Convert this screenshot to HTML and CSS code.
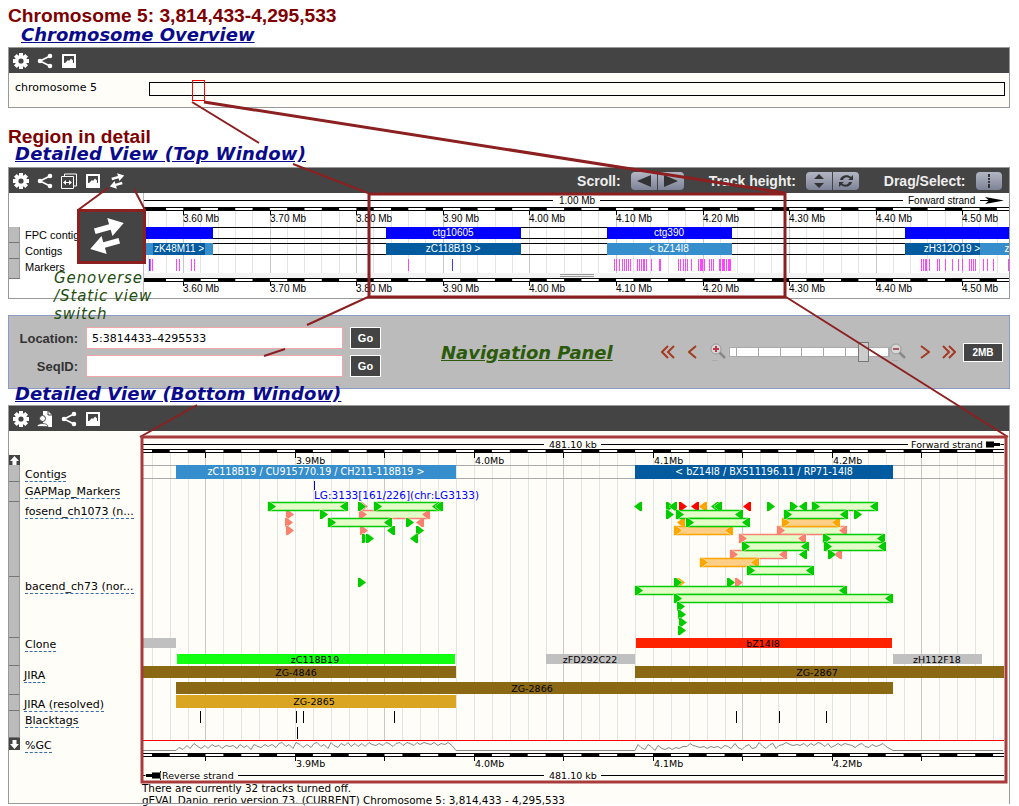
FILE: index.html
```html
<!DOCTYPE html>
<html lang="en">
<head>
    <meta charset="UTF-8">
    <title>Chromosome 5: 3,814,433-4,295,533</title>
    <link rel="stylesheet" href="styles.css">
</head>
<body>
    <!-- shared icons and track glyphs -->
    <svg class="defs" width="0" height="0">
        <symbol id="i-gear" viewBox="0 0 16 16">
            <g fill="#fff">
                <rect x="6" y="0" width="4" height="16"/>
                <rect x="0" y="6" width="16" height="4"/>
                <rect x="6" y="0" width="4" height="16" transform="rotate(45 8 8)"/>
                <rect x="6" y="0" width="4" height="16" transform="rotate(-45 8 8)"/>
                <circle cx="8" cy="8" r="6"/>
            </g>
            <circle cx="8" cy="8" r="2.6" fill="#444"/>
        </symbol>
        <symbol id="i-share" viewBox="0 0 16 16">
            <path d="M13 3L3 8L13 13" fill="none" stroke="#fff" stroke-width="1.6"/>
            <circle cx="13" cy="3" r="2.3" fill="#fff"/>
            <circle cx="13" cy="13" r="2.3" fill="#fff"/>
            <circle cx="3" cy="8" r="2.3" fill="#fff"/>
        </symbol>
        <symbol id="i-image" viewBox="0 0 14 14">
            <path d="M0 0H14V14H0ZM2 2V9H12V2Z" fill="#fff"/>
            <path d="M3 9L6 6L7 7L9 4.5L11 6.5V9Z" fill="#fff"/>
        </symbol>
        <symbol id="i-pan" viewBox="0 0 16 16">
            <path d="M3.5 3.5V1H15.5V13H13M.5 3.5H12.5V15.5H.5Z" fill="none" stroke="#fff"/>
            <path d="M2 9.5L5 7V9H8V7L11 9.5L8 12V10H5V12Z" fill="#fff"/>
        </symbol>
        <symbol id="i-swap" viewBox="0 0 16 16">
            <g fill="#fff" transform="rotate(-16 8 8)">
                <path d="M4 3.9H10V1.400L15.500 5L10 8.600V6.100H4Z"/>
                <path d="M12 12.100H6V14.600L.5 11L6 7.400V9.900H12Z"/>
            </g>
        </symbol>
        <symbol id="i-doc" viewBox="0 0 16 16">
            <path d="M6 0H11L15 4V16H6Z" fill="#fff"/>
            <path d="M11 0V4H15" fill="none" stroke="#444"/>
            <circle cx="5.5" cy="7.5" r="3" fill="#fff" stroke="#444"/>
            <path d="M0 15.5C0 11.5 11 11.5 11 15.5Z" fill="#fff" stroke="#444" stroke-width=".8"/>
        </symbol>
        <path id="ar" d="M0 -4.5H2L8 0L2 4.5H0Z"/>
        <path id="al" d="M8 -4.5H6L0 0L6 4.5H8Z"/>
        <path id="strand" d="M0 -3H8V-1.500H14V1.500H8V3H0Z"/>
    </svg>

    <div class="page">
        <h1 class="page-title">Chromosome 5: 3,814,433-4,295,533</h1>
        <h2 class="note-title overview-title">Chromosome Overview</h2>

        <section class="panel">
            <div class="panel-head">
                <span class="head-icon"><svg class="ic16"><use href="#i-gear"/></svg></span>
                <span class="head-icon"><svg class="ic16"><use href="#i-share"/></svg></span>
                <span class="head-icon"><svg class="ic14"><use href="#i-image"/></svg></span>
            </div>
            <div class="overview-body">
                <div class="overview-label">chromosome 5</div>
                <div class="chr-bar"><span class="chr-window"></span></div>
            </div>
        </section>

        <h1 class="page-title region-title">Region in detail</h1>
        <h2 class="note-title top-title">Detailed View (Top Window)</h2>

        <section class="panel">
            <div class="panel-head">
                <span class="head-icon"><svg class="ic16"><use href="#i-gear"/></svg></span>
                <span class="head-icon"><svg class="ic16"><use href="#i-share"/></svg></span>
                <span class="head-icon"><svg class="ic16"><use href="#i-pan"/></svg></span>
                <span class="head-icon"><svg class="ic14"><use href="#i-image"/></svg></span>
                <span class="head-icon"><svg class="ic18"><use href="#i-swap"/></svg></span>
                <div class="head-tools">
                    <span class="tool-label">Scroll:</span>
                    <div class="tool-group">
                        <button class="tool-btn"><svg width="16" height="12"><path class="tool-glyph" d="M1 6L15 0V12Z"/></svg></button>
                        <button class="tool-btn"><svg width="16" height="12"><path class="tool-glyph" d="M15 6L1 0V12Z"/></svg></button>
                    </div>
                    <span class="tool-label">Track height:</span>
                    <div class="tool-group">
                        <button class="tool-btn"><svg width="12" height="14"><path class="tool-glyph" d="M6 0L11 5H1ZM6 14L1 9H11Z"/></svg></button>
                        <button class="tool-btn"><svg width="16" height="14"><path class="tool-glyph" d="M2 6C3 1 10 0 13 3L15 1V6H10L12 4.5C9 2.5 6 3 5 6ZM14 8C13 13 6 14 3 11L1 13V8H6L4 9.500C7 11.500 10 11 11 8Z"/></svg></button>
                    </div>
                    <span class="tool-label">Drag/Select:</span>
                    <div class="tool-group">
                        <button class="tool-btn tool-btn-drag"><svg width="4" height="14"><path class="tool-glyph" d="M1 0H3V3H1ZM1 4H3V6H1ZM1 7H3V9H1ZM1 10H3V14H1Z"/></svg></button>
                    </div>
                </div>
            </div>
            <div class="top-body">
                <div class="top-labels">
                    <div class="top-row"><span class="grip"></span><span>FPC contigs</span></div>
                    <div class="top-row"><span class="grip"></span><span>Contigs</span></div>
                    <div class="top-row top-row-last"><span class="grip"></span><span>Markers</span></div>
                </div>
                <svg class="top-image" width="865" height="105" viewBox="144 193 865 105">
                    <path class="grid" d="M148.500 211V278M166.500 211V278M200.500 211V278M218.500 211V278M235.500 211V278M252.500 211V278M287.500 211V278M304.500 211V278M321.500 211V278M339.500 211V278M373.500 211V278M391.500 211V278M408.500 211V278M425.500 211V278M460.500 211V278M477.500 211V278M495.500 211V278M512.500 211V278M546.500 211V278M564.500 211V278M581.500 211V278M598.500 211V278M633.500 211V278M650.500 211V278M668.500 211V278M685.500 211V278M720.500 211V278M737.500 211V278M754.500 211V278M771.500 211V278M806.500 211V278M823.500 211V278M841.500 211V278M858.500 211V278M893.500 211V278M910.500 211V278M927.500 211V278M945.500 211V278M979.500 211V278M997.500 211V278"/>
                    <path class="grid-major" d="M183.500 211V278M270.500 211V278M356.500 211V278M443.500 211V278M529.500 211V278M616.500 211V278M703.500 211V278M789.500 211V278M876.500 211V278M962.500 211V278"/>
                    <rect class="strip-soft" x="144" y="273" width="865" height="5"/>
                    <path class="rule" d="M144 200.500H553M600 200.500H903M980 200.500H990"/>
                    <path d="M985 197L1004 200.500L985 204L989 200.500Z"/>
                    <text class="t-ruler" x="559" y="203.500">1.00 Mb</text>
                    <text class="t-ruler" x="908" y="203.500">Forward strand</text>

                    <rect x="144" y="207" width="865" height="4"/>
                    <path class="strip-dash strip-dash-top" d="M166 209H1009"/>
                    <rect x="144" y="278" width="865" height="4"/>
                    <path class="strip-dash strip-dash-top" d="M166 280H1009"/>
                    <path class="rule" d="M183.500 211V215M270.500 211V215M356.500 211V215M443.500 211V215M529.500 211V215M616.500 211V215M703.500 211V215M789.500 211V215M876.500 211V215M962.500 211V215M183.500 282V286M270.500 282V286M356.500 282V286M443.500 282V286M529.500 282V286M616.500 282V286M703.500 282V286M789.500 282V286M876.500 282V286M962.500 282V286"/>
                    <g class="t-ruler">
                        <text x="183" y="222">3.60 Mb</text><text x="270" y="222">3.70 Mb</text><text x="356" y="222">3.80 Mb</text><text x="443" y="222">3.90 Mb</text><text x="529" y="222">4.00 Mb</text><text x="616" y="222">4.10 Mb</text><text x="703" y="222">4.20 Mb</text><text x="789" y="222">4.30 Mb</text><text x="876" y="222">4.40 Mb</text><text x="962" y="222">4.50 Mb</text>
                        <text x="183" y="292">3.60 Mb</text><text x="270" y="292">3.70 Mb</text><text x="356" y="292">3.80 Mb</text><text x="443" y="292">3.90 Mb</text><text x="529" y="292">4.00 Mb</text><text x="616" y="292">4.10 Mb</text><text x="703" y="292">4.20 Mb</text><text x="789" y="292">4.30 Mb</text><text x="876" y="292">4.40 Mb</text><text x="962" y="292">4.50 Mb</text>
                    </g>

                    <!-- FPC contigs -->
                    <path class="rule" d="M144 227.500H1009M144 238.500H1009M144 243.500H1009M144 254.500H1009"/>
                    <g class="c-fpc">
                        <rect x="144" y="227" width="69" height="12"/>
                        <rect x="386" y="227" width="135" height="12"/>
                        <rect x="607" y="227" width="125" height="12"/>
                        <rect x="905" y="227" width="104" height="12"/>
                    </g>
                    <g class="t-bar-top">
                        <text x="453" y="236">ctg10605</text>
                        <text x="669" y="236">ctg390</text>
                    </g>

                    <!-- Contigs -->
                    <g class="c-light">
                        <rect x="144" y="243" width="69" height="12"/>
                        <rect x="607" y="243" width="125" height="12"/>
                        <rect x="980" y="243" width="29" height="12"/>
                    </g>
                    <g class="c-dark">
                        <rect x="153" y="243" width="52" height="12"/>
                        <rect x="386" y="243" width="135" height="12"/>
                        <rect x="905" y="243" width="75" height="12"/>
                    </g>
                    <g class="t-bar-top">
                        <text x="179" y="252">zK48M11 &gt;</text>
                        <text x="453" y="252">zC118B19 &gt;</text>
                        <text x="669" y="252">&lt; bZ14I8</text>
                        <text x="952" y="252">zH312O19 &gt;</text>
                        <text x="1007" y="252">z</text>
                    </g>

                    <!-- Markers -->
                    <path class="marker" d="M150.500 259V271M152.500 259V271M176.500 259V271M179.500 259V271M191.500 259V271M194.500 259V271M408.500 259V271M614.500 259V271M616.500 259V271M619.500 259V271M622.500 259V271M624.500 259V271M626.500 259V271M628.500 259V271M630.500 259V271M637.500 259V271M639.500 259V271M641.500 259V271M643.500 259V271M644.500 259V271M646.500 259V271M651.500 259V271M659.500 259V271M660.500 259V271M678.500 259V271M680.500 259V271M683.500 259V271M685.500 259V271M687.500 259V271M691.500 259V271M698.500 259V271M700.500 259V271M701.500 259V271M702.500 259V271M704.500 259V271M709.500 259V271M711.500 259V271M713.500 259V271M719.500 259V271M720.500 259V271M722.500 259V271M723.500 259V271M724.500 259V271M726.500 259V271M728.500 259V271M729.500 259V271M730.500 259V271M921.500 259V271M923.500 259V271M925.500 259V271M926.500 259V271M929.500 259V271M937.500 259V271M939.500 259V271M945.500 259V271M952.500 259V271M958.500 259V271M962.500 259V271M969.500 259V271M971.500 259V271M973.500 259V271M975.500 259V271M983.500 259V271M987.500 259V271M993.500 259V271M1008.500 259V271"/>
                    <path class="marker-blue" d="M149.500 259V271M452.500 259V271"/>
                    <path class="resize-grip" d="M560 274.500H594M560 276.500H594"/>
                </svg>
            </div>
        </section>

        <section class="nav-panel">
            <div class="nav-form">
                <div class="nav-row">
                    <label class="nav-label">Location:</label>
                    <input class="nav-input" type="text" value="5:3814433&#8211;4295533">
                    <button class="go-btn">Go</button>
                </div>
                <div class="nav-row">
                    <label class="nav-label">SeqID:</label>
                    <input class="nav-input" type="text">
                    <button class="go-btn">Go</button>
                </div>
            </div>
            <h2 class="nav-title">Navigation Panel</h2>
            <div class="nav-zoom">
                <svg class="chev" width="14" height="14"><path d="M7 1L1 7L7 13M13 1L7 7L13 13"/></svg>
                <svg class="chev chev-one" width="9" height="14"><path d="M8 1L1 7L8 13"/></svg>
                <svg class="zoom-ic zoom-ic-in" width="16" height="18" viewBox="0 0 16 18"><path class="zoom-handle" d="M9 9L15 15"/><circle class="zoom-lens" cx="6" cy="6" r="5"/><path class="zoom-sign" d="M3 6H9M6 3V9"/><path class="zoom-dash" d="M2 17.500H8"/></svg>
                <div class="slider">
                    <span class="slider-seg"></span><span class="slider-seg"></span><span class="slider-seg"></span><span class="slider-seg"></span><span class="slider-seg"></span><span class="slider-seg"></span><span class="slider-seg"></span><span class="slider-seg"></span>
                    <span class="slider-handle"></span>
                </div>
                <svg class="zoom-ic zoom-ic-out" width="16" height="18" viewBox="0 0 16 18"><path class="zoom-handle" d="M9 9L15 15"/><circle class="zoom-lens" cx="6" cy="6" r="5"/><path class="zoom-sign" d="M3 6H9"/><path class="zoom-dash" d="M2 17.500H8"/></svg>
                <svg class="chev chev-next" width="10" height="14"><path d="M1 1L9 7L1 13"/></svg>
                <svg class="chev chev-end" width="14" height="14"><path d="M1 1L7 7L1 13M7 1L13 7L7 13"/></svg>
                <button class="zoom-size">2MB</button>
            </div>
        </section>

        <h2 class="note-title bottom-title">Detailed View (Bottom Window)</h2>

        <section class="panel panel-bottom">
            <div class="panel-head">
                <span class="head-icon"><svg class="ic16"><use href="#i-gear"/></svg></span>
                <span class="head-icon"><svg class="ic16"><use href="#i-doc"/></svg></span>
                <span class="head-icon"><svg class="ic16"><use href="#i-share"/></svg></span>
                <span class="head-icon"><svg class="ic14"><use href="#i-image"/></svg></span>
            </div>
            <div class="bottom-body">
                <div class="bottom-labels">
                    <span class="move-btn"><svg width="9" height="9"><path d="M4.500 0L9 5H6.500V9H2.500V5H0Z"/></svg></span>
                    <div class="trow t17"><span class="grip"></span><span class="tlabel">Contigs</span></div>
                    <div class="trow t20"><span class="grip"></span><span class="tlabel">GAPMap_Markers</span></div>
                    <div class="trow t75"><span class="grip"></span><span class="tlabel">fosend_ch1073 (n...</span></div>
                    <div class="trow t61"><span class="grip"></span><span class="tlabel">bacend_ch73 (nor...</span></div>
                    <div class="trow t28"><span class="grip"></span><span class="tlabel">Clone</span></div>
                    <div class="trow t29"><span class="grip"></span><span class="tlabel tlabel-jira">JIRA</span></div>
                    <div class="trow t16"><span class="grip"></span><span class="tlabel tlabel-jira">JIRA (resolved)</span></div>
                    <div class="trow t27"><span class="grip"></span><span class="tlabel">Blacktags</span></div>
                    <div class="trow t12"><span class="move-btn"><svg width="9" height="9"><path d="M4.500 9L0 4H2.500V0H6.500V4H9Z"/></svg></span><span class="tlabel tlabel-gc">%GC</span></div>
                </div>
                <svg class="bottom-image" width="866" height="352" viewBox="143 431 866 352">
                    <path class="grid" d="M152.500 453V740M170.500 453V740M188.500 453V740M223.500 453V740M241.500 453V740M259.500 453V740M277.500 453V740M295.500 453V740M313.500 453V740M331.500 453V740M349.500 453V740M367.500 453V740M402.500 453V740M420.500 453V740M438.500 453V740M456.500 453V740M474.500 453V740M492.500 453V740M510.500 453V740M528.500 453V740M546.500 453V740M581.500 453V740M599.500 453V740M617.500 453V740M635.500 453V740M653.500 453V740M671.500 453V740M689.500 453V740M707.500 453V740M725.500 453V740M760.500 453V740M778.500 453V740M796.500 453V740M814.500 453V740M832.500 453V740M850.500 453V740M868.500 453V740M886.500 453V740M904.500 453V740M939.500 453V740M957.500 453V740M975.500 453V740M993.500 453V740"/>
                    <path class="grid-major" d="M205.500 453V740M384.500 453V740M563.500 453V740M742.500 453V740M921.500 453V740"/>

                    <!-- top ruler -->
                    <path class="rule" d="M143 444.500H544M601 444.500H908M986 444.500H1004"/>
                    <use href="#strand" x="986" y="444.500"/>
                    <text class="t-track" x="549" y="448">481.10 kb</text>
                    <text class="t-track" x="911" y="448">Forward strand</text>
                    <rect x="143" y="449" width="861" height="4"/>
                    <path class="strip-dash strip-dash-bottom" d="M169.700 451H1004"/>
                    <path class="strip-dash-head" d="M143 451H152"/>
                    <path class="rule" d="M205.500 453V458M295.500 453V458M384.500 453V458M474.500 453V458M563.500 453V458M653.500 453V458M742.500 453V458M832.500 453V458M921.500 453V458"/>
                    <g class="t-track">
                        <text x="296" y="464">3.9Mb</text><text x="475" y="464">4.0Mb</text><text x="654" y="464">4.1Mb</text><text x="833" y="464">4.2Mb</text>
                    </g>

                    <!-- contigs -->
                    <path class="contig-rule" d="M143 465.500H1004M143 478.500H1004"/>
                    <rect class="c-light" x="176" y="465" width="280" height="14"/>
                    <rect class="c-dark" x="635" y="465" width="258" height="14"/>
                    <g class="t-contig">
                        <text x="316" y="475">zC118B19 / CU915770.19 / CH211-118B19 &gt;</text>
                        <text x="764" y="475">&lt; bZ14I8 / BX511196.11 / RP71-14I8</text>
                    </g>

                    <!-- GAPMap -->
                    <path class="gap-tick" d="M314.500 481V490"/>
                    <text class="t-gap" x="314" y="499">LG:3133[161/226](chr:LG3133)</text>

                    <!-- fosend / bacend: salmon -->
                    <g class="f-salmon">
                        <use href="#ar" x="286" y="514.500"/><use href="#ar" x="285" y="522.500"/><use href="#ar" x="286" y="530.500"/>
                        <use href="#ar" x="360" y="506.500"/><use href="#ar" x="360" y="530.500"/><use href="#al" x="416" y="522.500"/>
                        <use href="#al" x="834" y="554.500"/><use href="#ar" x="735" y="582.500"/>
                        <rect class="box" x="360" y="511" width="69" height="7"/><use href="#ar" x="359" y="514.500"/><use href="#al" x="422" y="514.500"/>
                        <rect class="box" x="778" y="527" width="68" height="7"/><use href="#ar" x="777" y="530.500"/><use href="#al" x="839" y="530.500"/>
                        <rect class="box" x="740" y="535" width="65" height="7"/><use href="#ar" x="739" y="538.500"/><use href="#al" x="798" y="538.500"/>
                        <rect class="box" x="731" y="551" width="55" height="7"/><use href="#ar" x="730" y="554.500"/><use href="#al" x="779" y="554.500"/>
                    </g>
                    <!-- orange -->
                    <g class="f-orange">
                        <use href="#al" x="699" y="506.500"/><use href="#al" x="677" y="522.500"/><use href="#ar" x="677" y="582.500"/>
                        <rect class="box" x="783" y="519" width="56" height="7"/><use href="#ar" x="782" y="522.500"/><use href="#al" x="832" y="522.500"/>
                        <rect class="box" x="675" y="527" width="57" height="7"/><use href="#ar" x="674" y="530.500"/><use href="#al" x="725" y="530.500"/>
                        <rect class="box" x="701" y="559" width="57" height="7"/><use href="#ar" x="700" y="562.500"/><use href="#al" x="751" y="562.500"/>
                    </g>
                    <!-- red -->
                    <g class="f-red">
                        <use href="#ar" x="679" y="506.500"/><use href="#al" x="691" y="506.500"/><use href="#al" x="743" y="506.500"/>
                    </g>
                    <!-- green -->
                    <g class="f-green">
                        <rect class="box" x="269" y="503" width="78" height="7"/><use href="#ar" x="268" y="506.500"/><use href="#al" x="340" y="506.500"/>
                        <use href="#ar" x="358" y="506.500"/>
                        <rect class="box" x="375" y="503" width="67" height="7"/><use href="#ar" x="374" y="506.500"/><use href="#al" x="432" y="506.500"/><use href="#al" x="435" y="506.500"/>
                        <use href="#ar" x="320" y="514.500"/>
                        <rect class="box" x="329" y="519" width="62" height="7"/><use href="#ar" x="328" y="522.500"/><use href="#al" x="384" y="522.500"/>
                        <use href="#ar" x="406" y="522.500"/>
                        <use href="#al" x="387" y="530.500"/><use href="#ar" x="416" y="530.500"/>
                        <use href="#ar" x="362" y="538.500"/><use href="#ar" x="366" y="538.500"/><use href="#al" x="410" y="538.500"/>
                        <use href="#ar" x="358" y="582.500"/>

                        <use href="#al" x="634" y="506.500"/><use href="#ar" x="666" y="506.500"/><use href="#al" x="669" y="506.500"/>
                        <use href="#al" x="711" y="506.500"/><use href="#al" x="714" y="506.500"/>
                        <use href="#ar" x="767" y="506.500"/><use href="#ar" x="790" y="506.500"/><use href="#al" x="799" y="506.500"/>
                        <rect class="box" x="813" y="503" width="64" height="7"/><use href="#ar" x="812" y="506.500"/><use href="#al" x="870" y="506.500"/>
                        <use href="#ar" x="666" y="514.500"/>
                        <rect class="box" x="677" y="511" width="65" height="7"/><use href="#ar" x="676" y="514.500"/><use href="#al" x="735" y="514.500"/>
                        <rect class="box" x="785" y="511" width="62" height="7"/><use href="#ar" x="784" y="514.500"/><use href="#al" x="840" y="514.500"/>
                        <use href="#ar" x="854" y="514.500"/>
                        <rect class="box" x="687" y="519" width="62" height="7"/><use href="#ar" x="686" y="522.500"/><use href="#al" x="742" y="522.500"/>
                        <rect class="box" x="824" y="535" width="60" height="7"/><use href="#ar" x="823" y="538.500"/><use href="#al" x="877" y="538.500"/>
                        <rect class="box" x="743" y="543" width="65" height="7"/><use href="#ar" x="742" y="546.500"/><use href="#al" x="801" y="546.500"/>
                        <rect class="box" x="825" y="543" width="60" height="7"/><use href="#ar" x="824" y="546.500"/><use href="#al" x="878" y="546.500"/>
                        <use href="#al" x="799" y="554.500"/><use href="#ar" x="828" y="554.500"/>
                        <rect class="box" x="748" y="567" width="65" height="7"/><use href="#ar" x="747" y="570.500"/><use href="#al" x="806" y="570.500"/>
                        <use href="#ar" x="674" y="582.500"/><use href="#ar" x="727" y="582.500"/>
                        <rect class="box" x="636" y="587" width="210" height="7"/><use href="#ar" x="635" y="590.500"/><use href="#al" x="839" y="590.500"/>
                        <rect class="box" x="675" y="595" width="217" height="7"/><use href="#ar" x="674" y="598.500"/><use href="#al" x="885" y="598.500"/>
                        <use href="#ar" x="677" y="606.500"/><use href="#ar" x="678" y="614.500"/><use href="#ar" x="679" y="622.500"/><use href="#ar" x="678" y="630.500"/>
                    </g>

                    <!-- clone -->
                    <g class="c-grey">
                        <rect x="143" y="638" width="33" height="10"/>
                        <rect x="546" y="654" width="89" height="10"/>
                        <rect x="893" y="654" width="89" height="10"/>
                    </g>
                    <rect class="c-red" x="636" y="638" width="256" height="10"/>
                    <rect class="c-lime" x="177" y="654" width="278" height="10"/>
                    <!-- JIRA -->
                    <g class="c-brown">
                        <rect x="143" y="666" width="313" height="12"/>
                        <rect x="635" y="666" width="369" height="12"/>
                        <rect x="176" y="682" width="717" height="12"/>
                    </g>
                    <rect class="c-gold" x="176" y="695" width="280" height="13"/>
                    <g class="t-bar">
                        <text x="763" y="647">bZ14I8</text>
                        <text x="315" y="663">zC118B19</text>
                        <text x="590" y="663">zFD292C22</text>
                        <text x="937" y="663">zH112F18</text>
                        <text x="296" y="676">ZG-4846</text>
                        <text x="817" y="676">ZG-2867</text>
                        <text x="532" y="692">ZG-2866</text>
                        <text x="314" y="705">ZG-2865</text>
                    </g>

                    <!-- blacktags -->
                    <path class="rule" d="M200.500 711V723M296.500 711V723M303.500 711V723M394.500 711V723M736.500 711V723M779.500 711V723M826.500 711V723M297.500 727V739"/>

                    <!-- %GC -->
                    <path class="gc-top" d="M143 740.500H1004"/>
                    <path class="gc-base" d="M143 750.500H176M456 750.500H635M893 750.500H1003"/>
                    <path class="gc-line" d="M176 750.500l3-3 4 2 4-4 3 3 4-5 4 3 3 2 4-3 3 3 4-4 3 2 4-1 3 3 4-3 4 1 3-1 4 3 3-4 4 3 3-2 4 4 3-5 4 2 3 1 4-3 3 2 4-2 4 3 3-4 3-1 4 4 3-2 4 4 3-6 4 2 3 3 4-3 4 3 3-4 3-1 4 4 3-2 4 4 3-6 3 3 4 2 3-4 4 2 3-3 3 4 4-3 3 3 4-3 3 3 4-4 3 2 4 1 3-2 4 2 3-3 3 1 4 3 3-3 4-1 3 3 4-3 3 1 4 2 3-3 3 2 4-2 3 1 4 1 3-2 4 3 3-2 4 1 3-2 4 3L456 750.500"/>
                    <path class="gc-line" d="M635 750.500l3-6 3 3 4 2 3-5 3 2 4 4 3-5 4 3 3 1 4-2 3 2 4-2 3 1 4-2 4 0 3-3 3 2 4 1 3 1 4-1 3 2 4-2 3 1 4-1 3 2 4-3 3 1 3 2 4-5 3 4 4 2 3-3 4-2 3 4 4-1 3-5 4 4 3 2 4-4 3-1 3 5 3-3 4-1 3-2 4 2 3 1 4-1 3 1 4-2 3 3 4-3 3 2 4-3 3 1 4 3 3-3 3 4 4-2 3-2 3 2 4-2 3 1 4 1 3 2 4-3 3-1 3 3 4 1 3-3 4 2 3-1 4-2 3 3L893 750.500"/>

                    <!-- bottom ruler -->
                    <rect x="143" y="753" width="861" height="4"/>
                    <path class="strip-dash strip-dash-bottom" d="M169.700 755H1004"/>
                    <path class="strip-dash-head" d="M143 755H152"/>
                    <path class="rule" d="M205.500 757V761M295.500 757V761M384.500 757V761M474.500 757V761M563.500 757V761M653.500 757V761M742.500 757V761M832.500 757V761M921.500 757V761"/>
                    <g class="t-track">
                        <text x="296" y="767">3.9Mb</text><text x="475" y="767">4.0Mb</text><text x="654" y="767">4.1Mb</text><text x="833" y="767">4.2Mb</text>
                    </g>
                    <path class="rule" d="M143 775.500H148M238 775.500H544M601 775.500H1004M160.500 771V780"/>
                    <use href="#strand" transform="translate(160 775.500) scale(-1 1)"/>
                    <text class="t-track" x="162" y="779">Reverse strand</text>
                    <text class="t-track" x="549" y="779">481.10 kb</text>
                </svg>
            </div>
            <div class="panel-foot">
                <p>There are currently 32 tracks turned off.</p>
                <p>gEVAL Danio_rerio version 73. (CURRENT) Chromosome 5: 3,814,433 - 4,295,533</p>
            </div>
        </section>
    </div>

    <!-- hand-drawn annotations that lie over the screenshot -->
    <svg class="notes" width="1019" height="806" viewBox="0 0 1019 806">
        <path class="note-line" d="M192 102L259 143"/>
        <path class="note-line note-thick" d="M204 102L785 193"/>
        <path class="note-line" d="M293 164L368 193"/>
        <path class="note-line" d="M368 297L307 325"/>
        <path class="note-line" d="M264 356L285 349"/>
        <path class="note-line" d="M786 297L1008 437"/>
        <path class="note-line" d="M197 405L140 437"/>
        <path class="note-line" d="M108 188L78 210"/>
        <path class="note-line" d="M134 189L145 210"/>
        <rect class="note-box" x="369" y="194" width="416" height="103"/>
        <rect class="note-box-soft" x="142" y="437" width="864" height="345"/>
        <rect class="note-popup" x="78.500" y="210.500" width="66" height="52"/>
        <use href="#i-swap" x="86" y="215" width="42" height="42"/>
    </svg>
    <div class="switch-note">Genoverse<br>/Static view<br>switch</div>
</body>
</html>
```

FILE: styles.css
```css
* {
    box-sizing: border-box;
}

body {
    margin: 0;
    background: #fff;
    font-family: "Liberation Sans", Arial, sans-serif;
    position: relative;
    height: 806px;
    overflow: hidden;
}

.defs {
    position: absolute;
}

.page {
    width: 1002px;
    margin-left: 8px;
}

.page-title {
    margin: 0;
    padding-top: 6px;
    height: 25px;
    line-height: 20px;
    font-size: 19.200px;
    font-weight: bold;
    color: #7f0000;
}

.region-title {
    margin-top: 19px;
    padding-top: 0;
    height: 19px;
}

.note-title {
    margin: 0;
    font-family: "DejaVu Sans", sans-serif;
    font-style: italic;
    font-weight: bold;
    font-size: 18px;
    color: #0a0a8c;
    text-decoration: underline;
}

.overview-title {
    height: 22px;
    padding-left: 13px;
    line-height: 20px;
}

.top-title {
    height: 21px;
    padding-left: 7px;
    line-height: 16px;
    letter-spacing: .23px;
}

.bottom-title {
    height: 17px;
    margin-top: -1px;
    padding-left: 7px;
    line-height: 12px;
    letter-spacing: .07px;
}

/* panels */
.panel {
    border: 1px solid #999;
    background: #fff;
}

.panel-head {
    display: flex;
    align-items: center;
    height: 25px;
    background: #444;
}

.head-icon {
    width: 24px;
    height: 25px;
    display: flex;
    align-items: center;
    justify-content: center;
}

.ic18 {
    width: 18px;
    height: 18px;
}

.ic16 {
    width: 16px;
    height: 16px;
}

.ic14 {
    width: 14px;
    height: 14px;
}

.head-tools {
    margin-left: auto;
    padding-right: 7px;
    display: flex;
    align-items: center;
}

.tool-label {
    font-size: 14px;
    font-weight: bold;
    color: #eee;
    margin-left: 25px;
}

.tool-group {
    display: flex;
    margin-left: 10px;
    height: 18px;
}

.tool-btn {
    width: 26.500px;
    height: 18px;
    padding: 0;
    border: 0;
    border-left: 1px solid #444;
    background: linear-gradient(#b3b7c4, #7d8297);
    display: flex;
    align-items: center;
    justify-content: center;
}

.tool-btn:first-child {
    border-left: 0;
    border-radius: 4px 0 0 4px;
}

.tool-btn:last-child {
    border-radius: 0 4px 4px 0;
}

.tool-btn-drag,
.tool-btn-drag:first-child {
    border-radius: 4px;
}

.tool-glyph {
    fill: #333;
}

/* overview */
.overview-body {
    display: flex;
    align-items: center;
    height: 34px;
    background: #fffdf8;
    padding-left: 6px;
}

.overview-label {
    width: 134px;
    font-family: "DejaVu Sans", sans-serif;
    font-size: 11px;
    padding-bottom: 5px;
}

.chr-bar {
    position: relative;
    width: 856px;
    height: 14px;
    border: 1px solid #000;
    background: #fffdf8;
    margin-bottom: 3px;
}

.chr-window {
    position: absolute;
    left: 42px;
    top: -3px;
    width: 13px;
    height: 21px;
    border: 1px solid #f00;
}

/* top window */
.top-body {
    display: flex;
    height: 105px;
}

.top-labels {
    width: 135px;
    padding-top: 34px;
    border-right: 1px solid #bbb;
    font-size: 11px;
    color: #000;
}

.top-row {
    display: flex;
    height: 16px;
    line-height: 17px;
}

.top-row-last {
    height: 20px;
}

.grip {
    flex: none;
    width: 11px;
    margin-right: 5px;
    background: #bbb;
    border-bottom: 1px solid #777;
    border-right: 1px solid #999;
}

.top-image,
.bottom-image {
    display: block;
    flex: none;
}

/* track picture */
.grid {
    fill: none;
    stroke: #e4e4e4;
    shape-rendering: crispEdges;
}

.grid-major {
    fill: none;
    stroke: #c8c8c8;
    shape-rendering: crispEdges;
}

.rule {
    fill: none;
    stroke: #000;
    shape-rendering: crispEdges;
}

.strip-soft {
    fill: #f3f3f3;
}

.strip-dash {
    fill: none;
    stroke: #fff;
    stroke-width: 2px;
}

.strip-dash-top {
    stroke-dasharray: 17.31 17.31;
}

.strip-dash-bottom {
    stroke-dasharray: 17.9 17.9;
}

.strip-dash-head {
    fill: none;
    stroke: #fff;
    stroke-width: 2px;
}

.t-ruler {
    font: 10px "Liberation Sans", sans-serif;
}

.t-track {
    font: 9.500px "DejaVu Sans", sans-serif;
}

.t-bar {
    font: 9.500px "DejaVu Sans", sans-serif;
    text-anchor: middle;
}

.t-bar-top {
    font: 10px "Liberation Sans", sans-serif;
    fill: #fff;
    text-anchor: middle;
}

.t-contig {
    font: 9.600px "DejaVu Sans", sans-serif;
    fill: #fff;
    text-anchor: middle;
}

.t-gap {
    font: 10.500px "DejaVu Sans", sans-serif;
    fill: #00f;
}

.c-fpc {
    fill: #00f;
}

.c-light {
    fill: #368fcc;
}

.c-dark {
    fill: #025a9f;
}

.c-grey {
    fill: #c0c0c0;
}

.c-red {
    fill: #ff2200;
}

.c-lime {
    fill: #11ff11;
}

.c-brown {
    fill: #8b6914;
}

.c-gold {
    fill: #daa520;
}

.marker {
    fill: none;
    stroke: #ff44ff;
    shape-rendering: crispEdges;
}

.marker-blue {
    fill: none;
    stroke: #3a3aff;
    shape-rendering: crispEdges;
}

.resize-grip {
    fill: none;
    stroke: #999;
    shape-rendering: crispEdges;
}

.contig-rule {
    fill: none;
    stroke: #aaa;
    shape-rendering: crispEdges;
}

.gap-tick {
    fill: none;
    stroke: #00f;
    shape-rendering: crispEdges;
}

.gc-top {
    fill: none;
    stroke: #f00;
    shape-rendering: crispEdges;
}

.gc-base,
.gc-line {
    fill: none;
    stroke: #888;
}

.f-green {
    color: #00cc00;
    fill: #00cc00;
}

.f-salmon {
    color: #fa8072;
    fill: #fa8072;
}

.f-orange {
    color: #ffa500;
    fill: #ffa500;
}

.f-red {
    color: #f00;
    fill: #f00;
}

.bottom-image use {
    stroke: #f6fbd8;
    stroke-width: 1px;
    paint-order: stroke;
}

.box {
    fill: #e3fcc8;
    stroke: currentColor;
    stroke-width: 1.500px;
    height: 8px;
    transform: translate(-.5px, -.5px);
}

.f-orange .box {
    fill: #ffcf87;
}

/* navigation panel */
.nav-panel {
    display: flex;
    align-items: center;
    height: 74px;
    margin-top: 16px;
    background: #bbb;
    border: 1px solid #8a9bc9;
}

.nav-form {
    display: flex;
    flex-direction: column;
    gap: 6px;
}

.nav-row {
    display: flex;
    align-items: center;
}

.nav-label {
    width: 69px;
    text-align: right;
    font-size: 13px;
    font-weight: bold;
    color: #333;
}

.nav-input {
    width: 257px;
    height: 22px;
    margin-left: 8px;
    padding: 0 5px;
    border: 1px solid #f0a8a8;
    background: #fff;
    font-family: "DejaVu Sans", sans-serif;
    font-size: 11px;
    color: #000;
}

.go-btn {
    width: 31px;
    height: 22px;
    margin-left: 7px;
    padding: 0;
    border: 1px solid #fff;
    background: #444;
    color: #fff;
    font: bold 11px "Liberation Sans", sans-serif;
}

.nav-title {
    margin: 0 0 0 60px;
    font-family: "DejaVu Sans", sans-serif;
    font-style: italic;
    font-weight: bold;
    font-size: 18px;
    color: #2a5a0a;
    text-decoration: underline;
}

.nav-zoom {
    display: flex;
    align-items: center;
    margin-left: auto;
    padding-right: 6px;
}

.chev path {
    fill: none;
    stroke: #a33a22;
    stroke-width: 2px;
}

.chev-one {
    margin-left: 13px;
}

.chev-next {
    margin-left: 14px;
}

.chev-end {
    margin-left: 12px;
}

.zoom-ic-in {
    margin-left: 13px;
}

.zoom-lens {
    fill: #d8d8d8;
    stroke: #999;
}

.zoom-handle {
    fill: none;
    stroke: #888;
    stroke-width: 2.5px;
}

.zoom-ic-in .zoom-sign {
    fill: none;
    stroke: #b9384a;
    stroke-width: 2px;
}

.zoom-ic-out .zoom-sign {
    fill: none;
    stroke: #a05a60;
    stroke-width: 2px;
}

.zoom-dash {
    fill: none;
    stroke: #aaa;
}

.slider {
    position: relative;
    display: flex;
    width: 161px;
    height: 10px;
    margin-left: 3px;
    background: #fff;
    border: 1px solid #aaa;
}

.slider-seg {
    flex: 1;
    border-right: 1px solid #aaa;
}

.slider-seg:first-child {
    flex: .3;
}

.slider-seg:last-child {
    border-right: 0;
}

.slider-handle {
    position: absolute;
    left: 128px;
    top: -6px;
    width: 11px;
    height: 20px;
    background: #ccc;
    border: 1px solid #777;
}

.zoom-size {
    width: 40px;
    height: 19px;
    margin-left: 7px;
    padding: 0;
    border: 1px solid #fff;
    background: #444;
    color: #fff;
    font: bold 10px "Liberation Sans", sans-serif;
}

/* bottom window */
.panel-bottom {
    position: relative;
    height: 399px;
    border-bottom: 0;
    background: #fffdf8;
}

.panel-bottom::after {
    content: "";
    position: absolute;
    left: -1px;
    bottom: 0;
    width: 335px;
    height: 1px;
    background: #999;
}

.bottom-body {
    display: flex;
    height: 352px;
}

.bottom-labels {
    width: 134px;
    padding-top: 24px;
    font-family: "DejaVu Sans", sans-serif;
    font-size: 11px;
}

.move-btn {
    display: flex;
    align-items: center;
    justify-content: center;
    width: 11px;
    height: 10px;
    background: #444;
    fill: #fff;
}

.trow {
    display: flex;
}

.trow .move-btn {
    height: 12px;
    flex: none;
}

.t12 { height: 12px; }
.t16 { height: 16px; }
.t17 { height: 17px; }
.t20 { height: 20px; }
.t27 { height: 27px; }
.t28 { height: 28px; }
.t29 { height: 29px; }
.t61 { height: 61px; }
.t75 { height: 75px; }

.tlabel {
    align-self: flex-start;
    margin-top: 3px;
    height: 14px;
    line-height: 13px;
    white-space: nowrap;
    border-bottom: 1px dashed #3a6ab0;
}

.t28 .tlabel {
    margin-top: 0;
}

.tlabel-jira {
    margin-left: -1px;
}

.tlabel-gc {
    margin-left: 5px;
    margin-top: 1px;
}

.panel-foot {
    margin-top: -1px;
    padding: 0 0 0 133px;
    font-family: "DejaVu Sans", sans-serif;
    font-size: 10.400px;
    line-height: 12px;
}

.panel-foot p {
    margin: 0;
}

/* annotations */
.notes {
    position: absolute;
    left: 0;
    top: 0;
    pointer-events: none;
}

.note-line {
    fill: none;
    stroke: #8c1f1f;
    stroke-width: 2px;
}

.note-thick {
    stroke-width: 3px;
}

.note-box {
    fill: none;
    stroke: #8c1f1f;
    stroke-width: 3px;
}

.note-box-soft {
    fill: none;
    stroke: #a83c3c;
    stroke-width: 3px;
}

.note-popup {
    fill: #444;
    stroke: #8c1f1f;
    stroke-width: 3px;
}

.switch-note {
    position: absolute;
    left: 54px;
    top: 269px;
    font-family: "DejaVu Sans", sans-serif;
    font-style: italic;
    font-size: 15px;
    line-height: 18px;
    color: #1f4d0f;
    letter-spacing: .9px;
}
```
